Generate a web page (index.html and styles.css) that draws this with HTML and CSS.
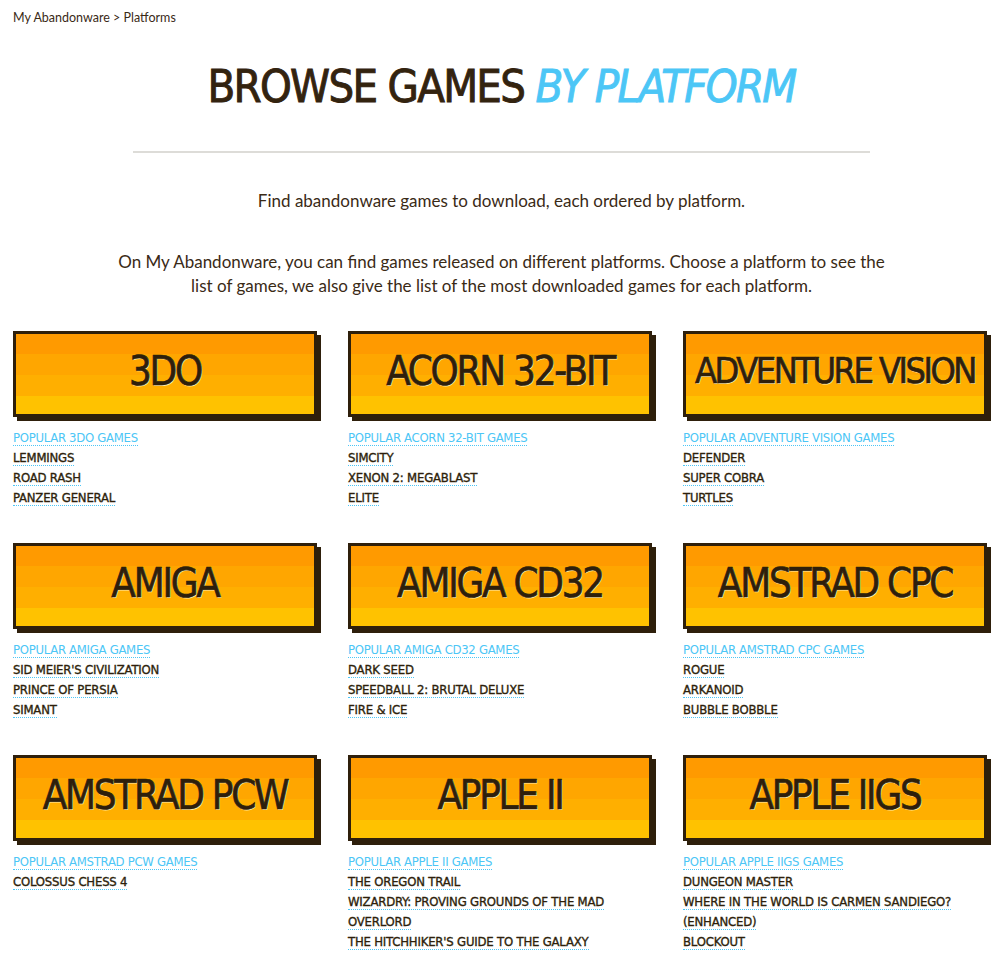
FILE: index.html
```html
<!DOCTYPE html>
<html lang="en">
<head>
<meta charset="utf-8">
<title>Platforms - My Abandonware</title>
<link rel="stylesheet" href="styles.css">
</head>
<body>
<nav class="crumbs"><a href="#">My Abandonware</a> &gt; <a href="#">Platforms</a></nav>
<h1 class="title">BROWSE GAMES <em>BY PLATFORM</em></h1>
<hr class="rule">
<p class="intro">Find abandonware games to download, each ordered by platform.</p>
<p class="desc">On My Abandonware, you can find games released on different platforms. Choose a platform to see the list of games, we also give the list of the most downloaded games for each platform.</p>
<div class="grid">
  <section class="platform">
    <a class="card" href="#"><span>3DO</span></a>
    <ul class="games">
      <li><a class="popular" href="#">POPULAR 3DO GAMES</a></li>
      <li><a href="#">LEMMINGS</a></li>
      <li><a href="#">ROAD RASH</a></li>
      <li><a href="#">PANZER GENERAL</a></li>
    </ul>
  </section>
  <section class="platform">
    <a class="card" href="#"><span>ACORN 32-BIT</span></a>
    <ul class="games">
      <li><a class="popular" href="#">POPULAR ACORN 32-BIT GAMES</a></li>
      <li><a href="#">SIMCITY</a></li>
      <li><a href="#">XENON 2: MEGABLAST</a></li>
      <li><a href="#">ELITE</a></li>
    </ul>
  </section>
  <section class="platform">
    <a class="card card-long" href="#"><span>ADVENTURE VISION</span></a>
    <ul class="games">
      <li><a class="popular" href="#">POPULAR ADVENTURE VISION GAMES</a></li>
      <li><a href="#">DEFENDER</a></li>
      <li><a href="#">SUPER COBRA</a></li>
      <li><a href="#">TURTLES</a></li>
    </ul>
  </section>
  <section class="platform">
    <a class="card" href="#"><span>AMIGA</span></a>
    <ul class="games">
      <li><a class="popular" href="#">POPULAR AMIGA GAMES</a></li>
      <li><a href="#">SID MEIER'S CIVILIZATION</a></li>
      <li><a href="#">PRINCE OF PERSIA</a></li>
      <li><a href="#">SIMANT</a></li>
    </ul>
  </section>
  <section class="platform">
    <a class="card" href="#"><span>AMIGA CD32</span></a>
    <ul class="games">
      <li><a class="popular" href="#">POPULAR AMIGA CD32 GAMES</a></li>
      <li><a href="#">DARK SEED</a></li>
      <li><a href="#">SPEEDBALL 2: BRUTAL DELUXE</a></li>
      <li><a href="#">FIRE &amp; ICE</a></li>
    </ul>
  </section>
  <section class="platform">
    <a class="card" href="#"><span>AMSTRAD CPC</span></a>
    <ul class="games">
      <li><a class="popular" href="#">POPULAR AMSTRAD CPC GAMES</a></li>
      <li><a href="#">ROGUE</a></li>
      <li><a href="#">ARKANOID</a></li>
      <li><a href="#">BUBBLE BOBBLE</a></li>
    </ul>
  </section>
  <section class="platform">
    <a class="card" href="#"><span>AMSTRAD PCW</span></a>
    <ul class="games">
      <li><a class="popular" href="#">POPULAR AMSTRAD PCW GAMES</a></li>
      <li><a href="#">COLOSSUS CHESS 4</a></li>
    </ul>
  </section>
  <section class="platform">
    <a class="card" href="#"><span>APPLE II</span></a>
    <ul class="games">
      <li><a class="popular" href="#">POPULAR APPLE II GAMES</a></li>
      <li><a href="#">THE OREGON TRAIL</a></li>
      <li><a href="#">WIZARDRY: PROVING GROUNDS OF THE MAD OVERLORD</a></li>
      <li><a href="#">THE HITCHHIKER'S GUIDE TO THE GALAXY</a></li>
    </ul>
  </section>
  <section class="platform">
    <a class="card" href="#"><span>APPLE IIGS</span></a>
    <ul class="games">
      <li><a class="popular" href="#">POPULAR APPLE IIGS GAMES</a></li>
      <li><a href="#">DUNGEON MASTER</a></li>
      <li><a href="#">WHERE IN THE WORLD IS CARMEN SANDIEGO? (ENHANCED)</a></li>
      <li><a href="#">BLOCKOUT</a></li>
    </ul>
  </section>
</div>
</body>
</html>
```

FILE: styles.css
```css
html, body {
  margin: 0;
  padding: 0;
  background: #ffffff;
}
body {
  font-family: "Lato", "Open Sans", sans-serif;
  color: #3a2a16;
  padding: 10px 4px 20px 13px;
}
a {
  color: inherit;
  text-decoration: none;
}
.crumbs {
  font-size: 12.5px;
  line-height: 16px;
  color: #3a2a16;
}
.title {
  margin: 37px 0 0;
  text-align: center;
  font-family: "DejaVu Sans Condensed", "DejaVu Sans", sans-serif;
  font-stretch: condensed;
  font-weight: 400;
  font-size: 45px;
  line-height: 48px;
  letter-spacing: -1.7px;
  color: #33230f;
  -webkit-text-stroke: 0.9px #33230f;
}
.title em {
  color: #4cc6f6;
  font-style: italic;
  -webkit-text-stroke: 0.9px #4cc6f6;
}
.rule {
  width: 737px;
  margin: 40px auto 0;
  border: 0;
  height: 2px;
  background: #dddcd8;
}
.intro {
  margin: 36px 0 0;
  text-align: center;
  font-size: 17px;
  line-height: 24px;
}
.desc {
  margin: 37px auto 0;
  max-width: 770px;
  text-align: center;
  font-size: 17px;
  line-height: 24px;
}
.grid {
  margin-top: 33px;
  display: grid;
  grid-template-columns: repeat(3, 307px);
  column-gap: 28px;
  row-gap: 35px;
}
.card {
  display: flex;
  align-items: center;
  justify-content: center;
  width: 298px;
  height: 74px;
  padding-bottom: 6px;
  border: 3px solid #2e1f0b;
  box-shadow: 4px 4px 0 #2e1f0b;
  background: linear-gradient(to bottom,
    #ff9a00 0, #ff9a00 20px,
    #ffa600 20px, #ffa600 41px,
    #ffaf00 41px, #ffaf00 62px,
    #ffc200 62px, #ffc200 100%);
}
.card span {
  font-family: "DejaVu Sans Condensed", "DejaVu Sans", sans-serif;
  font-stretch: condensed;
  font-size: 40px;
  line-height: 40px;
  letter-spacing: -2.3px;
  color: #2e1f0b;
  -webkit-text-stroke: 0.7px #2e1f0b;
  text-shadow: 1px 1px 0 #ffe7a6;
  white-space: nowrap;
}
.card-long span {
  font-size: 36px;
  letter-spacing: -2.6px;
}
.games {
  list-style: none;
  margin: 11px 0 0;
  padding: 0;
  font-family: "DejaVu Sans Condensed", "DejaVu Sans", sans-serif;
  font-stretch: condensed;
  font-size: 13px;
  line-height: 20px;
}
.games a {
  font-weight: 400;
  letter-spacing: -0.2px;
  color: #2e1f0b;
  -webkit-text-stroke: 0.35px #2e1f0b;
  border-bottom: 1px dotted #4cc6f6;
}
.games a.popular {
  letter-spacing: -0.3px;
  color: #4cc6f6;
  -webkit-text-stroke: 0;
}
```
